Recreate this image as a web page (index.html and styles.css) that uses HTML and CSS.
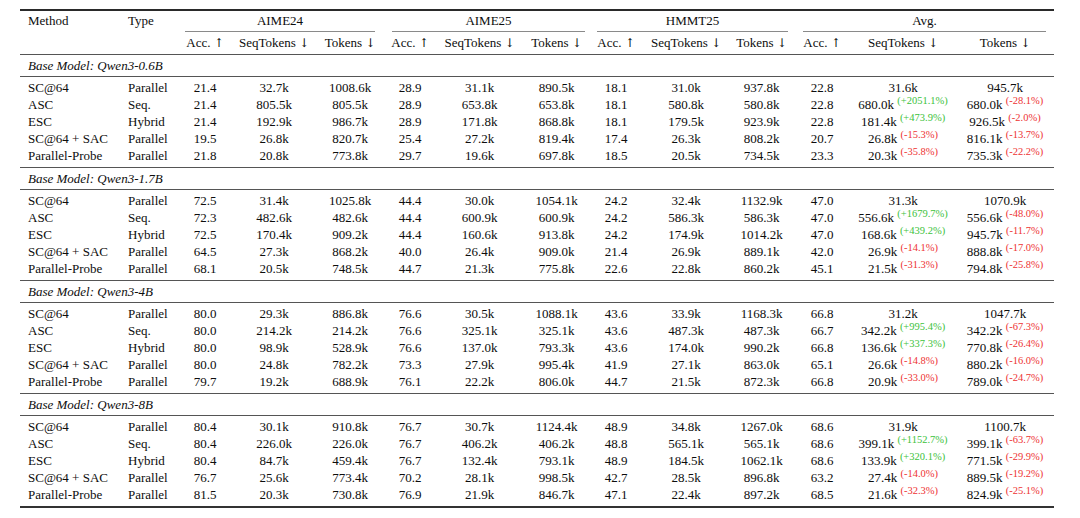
FILE: index.html
```html
<!DOCTYPE html>
<html lang="en">
<head>
<meta charset="utf-8">
<title>Results</title>
<link rel="stylesheet" href="styles.css">
</head>
<body>
<table class="results">
  <colgroup>
    <col class="c-method"><col class="c-type">
    <col class="c-a1"><col class="c-s1"><col class="c-t1">
    <col class="c-a2"><col class="c-s2"><col class="c-t2">
    <col class="c-a3"><col class="c-s3"><col class="c-t3">
    <col class="c-a4"><col class="c-s4"><col class="c-t4">
  </colgroup>
  <thead>
    <tr class="h1">
      <th class="l">Method</th><th class="l">Type</th>
      <th colspan="3"><div class="grp g1">AIME24</div></th>
      <th colspan="3"><div class="grp g2">AIME25</div></th>
      <th colspan="3"><div class="grp g3">HMMT25</div></th>
      <th colspan="3"><div class="grp g4">Avg.</div></th>
    </tr>
    <tr class="h2">
      <th></th><th></th>
      <th>Acc. <span class="arr">↑</span></th><th>SeqTokens <span class="arr">↓</span></th><th>Tokens <span class="arr">↓</span></th>
      <th>Acc. <span class="arr">↑</span></th><th>SeqTokens <span class="arr">↓</span></th><th>Tokens <span class="arr">↓</span></th>
      <th>Acc. <span class="arr">↑</span></th><th>SeqTokens <span class="arr">↓</span></th><th>Tokens <span class="arr">↓</span></th>
      <th>Acc. <span class="arr">↑</span></th><th>SeqTokens <span class="arr">↓</span></th><th>Tokens <span class="arr">↓</span></th>
    </tr>
  </thead>
  <tbody>
    <tr class="section"><td colspan="14">Base Model: Qwen3-0.6B</td></tr>
    <tr class="first"><td class="l">SC@64</td><td class="l">Parallel</td><td>21.4</td><td>32.7k</td><td>1008.6k</td><td>28.9</td><td>31.1k</td><td>890.5k</td><td>18.1</td><td>31.0k</td><td>937.8k</td><td>22.8</td><td>31.6k</td><td>945.7k</td></tr>
    <tr><td class="l">ASC</td><td class="l">Seq.</td><td>21.4</td><td>805.5k</td><td>805.5k</td><td>28.9</td><td>653.8k</td><td>653.8k</td><td>18.1</td><td>580.8k</td><td>580.8k</td><td>22.8</td><td>680.0k <span class="up">(+2051.1%)</span></td><td>680.0k <span class="dn">(-28.1%)</span></td></tr>
    <tr><td class="l">ESC</td><td class="l">Hybrid</td><td>21.4</td><td>192.9k</td><td>986.7k</td><td>28.9</td><td>171.8k</td><td>868.8k</td><td>18.1</td><td>179.5k</td><td>923.9k</td><td>22.8</td><td>181.4k <span class="up">(+473.9%)</span></td><td>926.5k <span class="dn">(-2.0%)</span></td></tr>
    <tr><td class="l">SC@64 + SAC</td><td class="l">Parallel</td><td>19.5</td><td>26.8k</td><td>820.7k</td><td>25.4</td><td>27.2k</td><td>819.4k</td><td>17.4</td><td>26.3k</td><td>808.2k</td><td>20.7</td><td>26.8k <span class="dn">(-15.3%)</span></td><td>816.1k <span class="dn">(-13.7%)</span></td></tr>
    <tr class="last"><td class="l">Parallel-Probe</td><td class="l">Parallel</td><td>21.8</td><td>20.8k</td><td>773.8k</td><td>29.7</td><td>19.6k</td><td>697.8k</td><td>18.5</td><td>20.5k</td><td>734.5k</td><td>23.3</td><td>20.3k <span class="dn">(-35.8%)</span></td><td>735.3k <span class="dn">(-22.2%)</span></td></tr>
  </tbody>
  <tbody>
    <tr class="section"><td colspan="14">Base Model: Qwen3-1.7B</td></tr>
    <tr class="first"><td class="l">SC@64</td><td class="l">Parallel</td><td>72.5</td><td>31.4k</td><td>1025.8k</td><td>44.4</td><td>30.0k</td><td>1054.1k</td><td>24.2</td><td>32.4k</td><td>1132.9k</td><td>47.0</td><td>31.3k</td><td>1070.9k</td></tr>
    <tr><td class="l">ASC</td><td class="l">Seq.</td><td>72.3</td><td>482.6k</td><td>482.6k</td><td>44.4</td><td>600.9k</td><td>600.9k</td><td>24.2</td><td>586.3k</td><td>586.3k</td><td>47.0</td><td>556.6k <span class="up">(+1679.7%)</span></td><td>556.6k <span class="dn">(-48.0%)</span></td></tr>
    <tr><td class="l">ESC</td><td class="l">Hybrid</td><td>72.5</td><td>170.4k</td><td>909.2k</td><td>44.4</td><td>160.6k</td><td>913.8k</td><td>24.2</td><td>174.9k</td><td>1014.2k</td><td>47.0</td><td>168.6k <span class="up">(+439.2%)</span></td><td>945.7k <span class="dn">(-11.7%)</span></td></tr>
    <tr><td class="l">SC@64 + SAC</td><td class="l">Parallel</td><td>64.5</td><td>27.3k</td><td>868.2k</td><td>40.0</td><td>26.4k</td><td>909.0k</td><td>21.4</td><td>26.9k</td><td>889.1k</td><td>42.0</td><td>26.9k <span class="dn">(-14.1%)</span></td><td>888.8k <span class="dn">(-17.0%)</span></td></tr>
    <tr class="last"><td class="l">Parallel-Probe</td><td class="l">Parallel</td><td>68.1</td><td>20.5k</td><td>748.5k</td><td>44.7</td><td>21.3k</td><td>775.8k</td><td>22.6</td><td>22.8k</td><td>860.2k</td><td>45.1</td><td>21.5k <span class="dn">(-31.3%)</span></td><td>794.8k <span class="dn">(-25.8%)</span></td></tr>
  </tbody>
  <tbody>
    <tr class="section"><td colspan="14">Base Model: Qwen3-4B</td></tr>
    <tr class="first"><td class="l">SC@64</td><td class="l">Parallel</td><td>80.0</td><td>29.3k</td><td>886.8k</td><td>76.6</td><td>30.5k</td><td>1088.1k</td><td>43.6</td><td>33.9k</td><td>1168.3k</td><td>66.8</td><td>31.2k</td><td>1047.7k</td></tr>
    <tr><td class="l">ASC</td><td class="l">Seq.</td><td>80.0</td><td>214.2k</td><td>214.2k</td><td>76.6</td><td>325.1k</td><td>325.1k</td><td>43.6</td><td>487.3k</td><td>487.3k</td><td>66.7</td><td>342.2k <span class="up">(+995.4%)</span></td><td>342.2k <span class="dn">(-67.3%)</span></td></tr>
    <tr><td class="l">ESC</td><td class="l">Hybrid</td><td>80.0</td><td>98.9k</td><td>528.9k</td><td>76.6</td><td>137.0k</td><td>793.3k</td><td>43.6</td><td>174.0k</td><td>990.2k</td><td>66.8</td><td>136.6k <span class="up">(+337.3%)</span></td><td>770.8k <span class="dn">(-26.4%)</span></td></tr>
    <tr><td class="l">SC@64 + SAC</td><td class="l">Parallel</td><td>80.0</td><td>24.8k</td><td>782.2k</td><td>73.3</td><td>27.9k</td><td>995.4k</td><td>41.9</td><td>27.1k</td><td>863.0k</td><td>65.1</td><td>26.6k <span class="dn">(-14.8%)</span></td><td>880.2k <span class="dn">(-16.0%)</span></td></tr>
    <tr class="last"><td class="l">Parallel-Probe</td><td class="l">Parallel</td><td>79.7</td><td>19.2k</td><td>688.9k</td><td>76.1</td><td>22.2k</td><td>806.0k</td><td>44.7</td><td>21.5k</td><td>872.3k</td><td>66.8</td><td>20.9k <span class="dn">(-33.0%)</span></td><td>789.0k <span class="dn">(-24.7%)</span></td></tr>
  </tbody>
  <tbody class="final">
    <tr class="section"><td colspan="14">Base Model: Qwen3-8B</td></tr>
    <tr class="first"><td class="l">SC@64</td><td class="l">Parallel</td><td>80.4</td><td>30.1k</td><td>910.8k</td><td>76.7</td><td>30.7k</td><td>1124.4k</td><td>48.9</td><td>34.8k</td><td>1267.0k</td><td>68.6</td><td>31.9k</td><td>1100.7k</td></tr>
    <tr><td class="l">ASC</td><td class="l">Seq.</td><td>80.4</td><td>226.0k</td><td>226.0k</td><td>76.7</td><td>406.2k</td><td>406.2k</td><td>48.8</td><td>565.1k</td><td>565.1k</td><td>68.6</td><td>399.1k <span class="up">(+1152.7%)</span></td><td>399.1k <span class="dn">(-63.7%)</span></td></tr>
    <tr><td class="l">ESC</td><td class="l">Hybrid</td><td>80.4</td><td>84.7k</td><td>459.4k</td><td>76.7</td><td>132.4k</td><td>793.1k</td><td>48.9</td><td>184.5k</td><td>1062.1k</td><td>68.6</td><td>133.9k <span class="up">(+320.1%)</span></td><td>771.5k <span class="dn">(-29.9%)</span></td></tr>
    <tr><td class="l">SC@64 + SAC</td><td class="l">Parallel</td><td>76.7</td><td>25.6k</td><td>773.4k</td><td>70.2</td><td>28.1k</td><td>998.5k</td><td>42.7</td><td>28.5k</td><td>896.8k</td><td>63.2</td><td>27.4k <span class="dn">(-14.0%)</span></td><td>889.5k <span class="dn">(-19.2%)</span></td></tr>
    <tr class="last"><td class="l">Parallel-Probe</td><td class="l">Parallel</td><td>81.5</td><td>20.3k</td><td>730.8k</td><td>76.9</td><td>21.9k</td><td>846.7k</td><td>47.1</td><td>22.4k</td><td>897.2k</td><td>68.5</td><td>21.6k <span class="dn">(-32.3%)</span></td><td>824.9k <span class="dn">(-25.1%)</span></td></tr>
  </tbody>
</table>
</body>
</html>
```

FILE: styles.css
```css
html, body {
  margin: 0;
  padding: 0;
  background: #ffffff;
}

body {
  font-family: "Liberation Serif", "Times New Roman", serif;
  font-size: 13px;
  color: #0d0d0d;
}

.results {
  margin: 9px 0 0 20px;
  width: 1034px;
  table-layout: fixed;
  border-collapse: separate;
  border-spacing: 0;
}

.c-method { width: 100px; }
.c-type { width: 57px; }
.c-a1 { width: 56px; }
.c-s1 { width: 82px; }
.c-t1 { width: 70px; }
.c-a2 { width: 50px; }
.c-s2 { width: 89px; }
.c-t2 { width: 65px; }
.c-a3 { width: 54px; }
.c-s3 { width: 86px; }
.c-t3 { width: 65px; }
.c-a4 { width: 56px; }
.c-s4 { width: 106px; }
.c-t4 { width: 98px; }

.results th,
.results td {
  padding: 0;
  font-weight: normal;
  text-align: center;
  white-space: nowrap;
  vertical-align: top;
}

.results .l {
  text-align: left;
}

.results th.l,
.results td.l {
  padding-left: 8px;
}

/* header row 1 */
.h1 th {
  border-top: 2px solid #2a2a2a;
  line-height: 20px;
}

.grp {
  border-bottom: 1px solid #8a8a8a;
}

.g1 { margin: 0 10px 0 8px; }
.g2 { margin: 0 4px 0 7px; }
.g3 { margin: 0 6px 0 8px; }
.g4 { margin: 0 8px 0 9px; }

/* header row 2 */
.h2 th {
  line-height: 22px;
  border-bottom: 1px solid #555555;
}

.arr {
  font-family: "DejaVu Serif", "Liberation Serif", serif;
  font-size: 12px;
}

/* section (base model) rows */
.section td {
  line-height: 21px;
  font-style: italic;
  text-align: left;
  padding-left: 8px;
  border-bottom: 1px solid #555555;
}

/* data rows */
.results tbody td {
  line-height: 17px;
}

.results tbody .section td {
  line-height: 21px;
}

.results tr.first td {
  padding-top: 2px;
}

.results tr.last td {
  padding-bottom: 3px;
  border-bottom: 1px solid #555555;
}

.results tbody.final tr.last td {
  border-bottom: 2px solid #333333;
}

.up,
.dn {
  font-size: 10.5px;
  line-height: 0;
  vertical-align: 5.5px;
}

.up { color: #3cc23c; }
.dn { color: #ee3333; }
```
